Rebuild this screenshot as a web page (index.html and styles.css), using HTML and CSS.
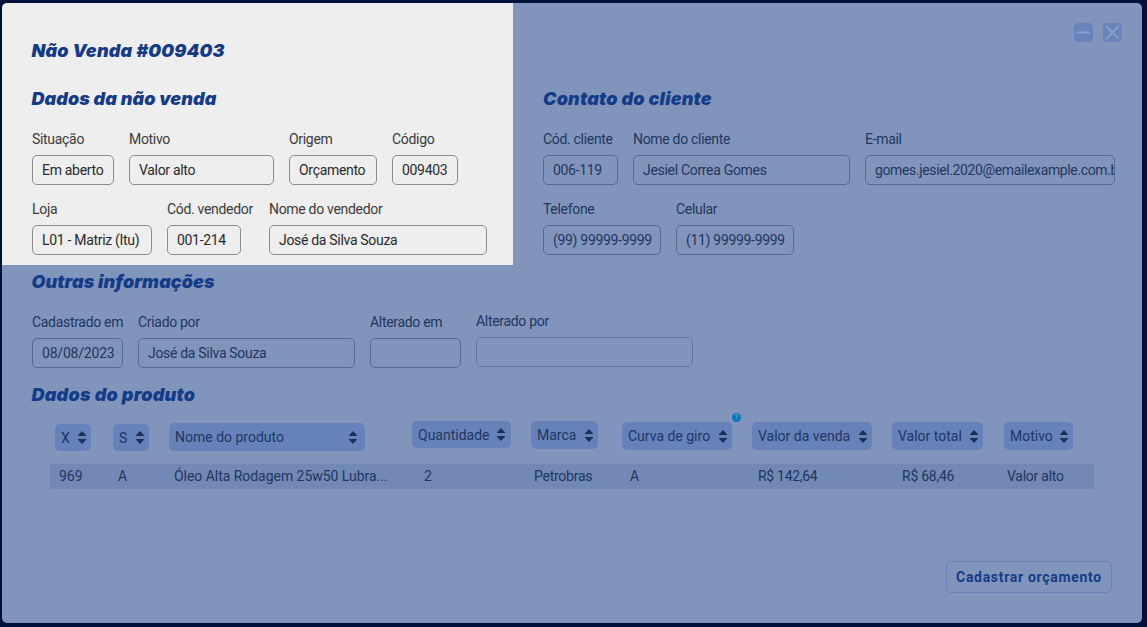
FILE: index.html
```
<!DOCTYPE html>
<html lang="pt-BR">
<head>
<meta charset="utf-8">
<title>Não Venda #009403</title>
<link rel="stylesheet" href="styles.css">
</head>
<body>
<svg class="defs" width="0" height="0" aria-hidden="true">
  <symbol id="sort" viewBox="0 0 8 13"><path d="M4 0 8 4.200V5H0v-.8ZM0 8h8v.8L4 13 0 8.800Z"/></symbol>
</svg>
<main class="modal">
  <div class="top">
    <section class="sale">
      <h1 class="title t-main">Não Venda #009403</h1>
      <h2 class="title t-sale">Dados da não venda</h2>
      <div class="fields">
        <div class="field w82"><label>Situação</label><div class="box">Em aberto</div></div>
        <div class="field w145"><label>Motivo</label><div class="box">Valor alto</div></div>
        <div class="field w88"><label>Origem</label><div class="box">Orçamento</div></div>
        <div class="field w66"><label>Código</label><div class="box">009403</div></div>
      </div>
      <div class="fields">
        <div class="field w120"><label>Loja</label><div class="box">L01 - Matriz (Itu)</div></div>
        <div class="field w87"><label>Cód. vendedor</label><div class="box narrow">001-214</div></div>
        <div class="field w218"><label>Nome do vendedor</label><div class="box">José da Silva Souza</div></div>
      </div>
    </section>
    <section class="client">
      <div class="controls">
        <svg width="19" height="19" viewBox="0 0 19 19"><rect width="19" height="19" rx="4.500"/><path d="M3.500 9.500h12"/></svg>
        <svg width="19" height="19" viewBox="0 0 19 19"><rect width="19" height="19" rx="4.500"/><path d="m3.500 3.500 12 12m0-12-12 12"/></svg>
      </div>
      <h2 class="title t-client">Contato do cliente</h2>
      <div class="fields">
        <div class="field w75"><label>Cód. cliente</label><div class="box">006-119</div></div>
        <div class="field w217"><label>Nome do cliente</label><div class="box">Jesiel Correa Gomes</div></div>
        <div class="field w250"><label>E-mail</label><div class="box email">gomes.jesiel.2020@emailexample.com.br</div></div>
      </div>
      <div class="fields">
        <div class="field w118"><label>Telefone</label><div class="box">(99) 99999-9999</div></div>
        <div class="field w118"><label>Celular</label><div class="box">(11) 99999-9999</div></div>
      </div>
    </section>
  </div>
  <section class="other">
    <h2 class="title t-other">Outras informações</h2>
    <div class="fields">
      <div class="field w91"><label>Cadastrado em</label><div class="box date">08/08/2023</div></div>
      <div class="field w217"><label>Criado por</label><div class="box">José da Silva Souza</div></div>
      <div class="field w91"><label>Alterado em</label><div class="box"></div></div>
      <div class="field w217 raised"><label>Alterado por</label><div class="box soft"></div></div>
    </div>
  </section>
  <section class="product">
    <h2 class="title t-product">Dados do produto</h2>
    <div class="grid head">
      <div class="pill p-x">X<svg><use href="#sort"/></svg></div>
      <div class="pill p-s">S<svg><use href="#sort"/></svg></div>
      <div class="pill p-name">Nome do produto<svg><use href="#sort"/></svg></div>
      <div class="pill p-qty">Quantidade<svg><use href="#sort"/></svg></div>
      <div class="pill p-brand">Marca<svg><use href="#sort"/></svg></div>
      <div class="pill p-curve">Curva de giro<svg><use href="#sort"/></svg><span class="help">?</span></div>
      <div class="pill p-sale">Valor da venda<svg><use href="#sort"/></svg></div>
      <div class="pill p-total">Valor total<svg><use href="#sort"/></svg></div>
      <div class="pill p-reason">Motivo<svg><use href="#sort"/></svg></div>
    </div>
    <div class="grid row">
      <span class="c-x">969</span><span class="c-s">A</span><span class="c-name">Óleo Alta Rodagem 25w50 Lubra...</span><span class="c-qty">2</span><span class="c-brand">Petrobras</span><span class="c-curve">A</span><span class="c-sale">R$ 142,64</span><span class="c-total">R$ 68,46</span><span class="c-reason">Valor alto</span>
    </div>
  </section>
  <footer class="actions"><button class="submit">Cadastrar orçamento</button></footer>
</main>
</body>
</html>
```
FILE: styles.css
```
* { box-sizing: border-box; }
body {
  margin: 0;
  height: 627px;
  padding: 3px 5px 4px 2px;
  background: #001139;
  overflow: hidden;
  font: 14px/20px Roboto, sans-serif;
  color: #213660;
}
.defs { display: none; }
.modal {
  width: 1140px;
  height: 620px;
  display: flex;
  flex-direction: column;
  background: #8195bc;
  border-radius: 5px;
  overflow: hidden;
}
.top { display: flex; height: 262px; }
.sale {
  width: 511px;
  padding: 36px 0 0 30px;
  background: #eee;
  color: #2a2a2a;
}
.client { flex: 1; padding: 20px 20px 0 30px; }
.title {
  margin: 0;
  height: 24px;
  font: italic 900 18px/24px Inter, sans-serif;
  color: #133b88;
  white-space: nowrap;
  text-indent: -.5px;
}
.t-main { margin-bottom: 24px; letter-spacing: .2px; }
.t-sale, .t-other { letter-spacing: .08px; }
.t-client { letter-spacing: .2px; text-indent: 0; }
.t-product { letter-spacing: .25px; }
.sale .fields, .client .fields, .other .fields { display: flex; gap: 15px; }
.title + .fields { margin-top: 18px; }
.fields + .fields { margin-top: 14px; }
.field { flex: none; white-space: nowrap; letter-spacing: -.31px; }
.field label { display: block; height: 20px; margin-bottom: 6px; }
.sale label { color: #3b3b3b; }
.box {
  height: 30px;
  padding: 0 9px;
  line-height: 28px;
  border: 1px solid #566a94;
  border-radius: 5px;
  overflow: hidden;
}
.box.email { letter-spacing: -.37px; }
.box.date { letter-spacing: -.2px; }
.sale .box { border-color: #8b8b8b; }
.box.narrow { width: 74px; }
.box.soft { border-color: #64779f; }
.raised { margin-top: -1px; }
.w66 { width: 66px; }
.w75 { width: 75px; }
.w82 { width: 82px; }
.w87 { width: 87px; }
.w88 { width: 88px; }
.w91 { width: 91px; }
.w118 { width: 118px; }
.w120 { width: 120px; }
.w145 { width: 145px; }
.w217 { width: 217px; }
.w218 { width: 218px; }
.w250 { width: 250px; }
.controls { display: flex; justify-content: flex-end; gap: 10px; height: 64px; }
.controls rect { fill: #6984bd; }
.controls path { fill: none; stroke: #8a9dc4; stroke-width: 1.8; stroke-linecap: round; }
.other { padding: 5px 0 0 30px; }
.product { padding: 15px 0 0; }
.t-product { margin-left: 30px; }
.grid {
  display: grid;
  grid-template-columns: 58px 56px 243px 119px 91px 130px 140px 112px 86px;
}
.head { margin: 14px 0 0 53px; height: 31px; align-items: start; }
.pill {
  position: relative;
  display: flex;
  align-items: center;
  justify-content: space-between;
  height: 28px;
  padding: 0 5px 0 6px;
  border-radius: 5px;
  background: #6782bb;
  white-space: nowrap;
}
.pill svg { width: 8px; height: 13px; fill: #1d3158; }
.p-x, .p-s { width: 36px; margin-top: 3px; height: 27px; }
.p-name { width: 196px; margin-top: 2px; padding-right: 8px; }
.p-qty { width: 99px; height: 27px; padding-right: 6px; }
.p-brand { width: 67px; }
.p-curve { width: 110px; margin-top: 1px; }
.p-sale { width: 120px; margin-top: 1px; }
.p-total { width: 91px; margin-top: 1px; }
.p-reason { width: 69px; margin-top: 1px; }
.help {
  position: absolute;
  top: -9px;
  right: -9px;
  width: 9px;
  height: 9px;
  border-radius: 50%;
  background: #0875bd;
  color: #6eaad2;
  font: 700 7px/9px Roboto, sans-serif;
  text-align: center;
}
.row {
  width: 1044px;
  height: 25px;
  margin: 12px 0 0 48px;
  padding-left: 5px;
  line-height: 25px;
  background: #7289b5;
  white-space: nowrap;
}
.c-x { padding-left: 4px; }
.c-s, .c-name { padding-left: 5px; }
.c-name { letter-spacing: -.04px; }
.c-qty { padding-left: 12px; }
.c-brand { padding-left: 3px; letter-spacing: -.25px; }
.c-curve { padding-left: 8px; }
.c-sale { padding-left: 6px; letter-spacing: -.3px; }
.c-total { padding-left: 10px; letter-spacing: -.25px; }
.c-reason { padding-left: 3px; letter-spacing: -.25px; }
.actions { display: flex; justify-content: flex-end; margin: auto 30px 30px 0; }
.submit {
  width: 166px;
  height: 32px;
  padding: 0;
  border: 1px solid #6782bb;
  border-radius: 5px;
  background: transparent;
  color: #133b88;
  font: 700 14px/20px Roboto, sans-serif;
  letter-spacing: .7px;
}
```
